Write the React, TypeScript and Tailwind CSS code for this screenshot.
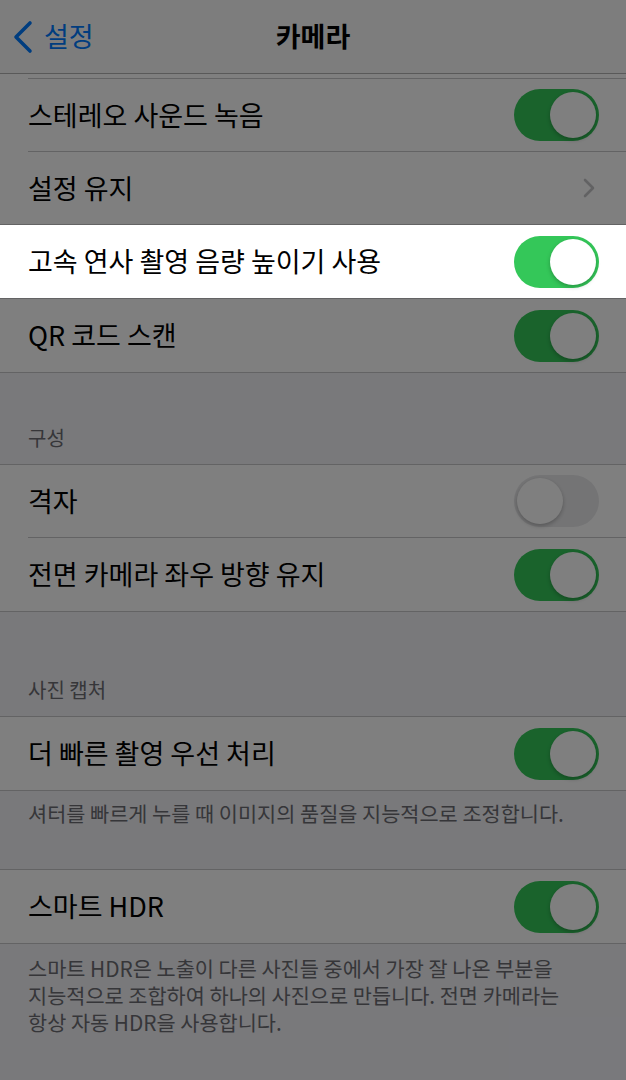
import { ReactNode } from 'react'
import clsx from 'clsx'

const FONT = '"Noto Sans CJK KR", "Noto Sans", sans-serif'

function Toggle({ on = true }: { on?: boolean }) {
  return (
    <div
      className={clsx(
        'flex h-[52px] w-[85px] shrink-0 items-center rounded-full p-[3px]',
        on ? 'justify-end bg-[#34c759]' : 'justify-start bg-[#e9e9eb]',
      )}
    >
      <div className="h-[46px] w-[46px] rounded-full bg-white shadow-[0_2px_4px_rgba(0,0,0,0.25)]" />
    </div>
  )
}

function Chevron() {
  return (
    <svg width="14" height="22" viewBox="0 0 14 22" className="shrink-0">
      <path
        d="M3 3l8 8-8 8"
        fill="none"
        stroke="#c4c4c7"
        strokeWidth="2.6"
        strokeLinecap="round"
        strokeLinejoin="round"
      />
    </svg>
  )
}

function Row({
  label,
  right,
  last,
  highlight,
}: {
  label: string
  right: ReactNode
  last?: boolean
  highlight?: boolean
}) {
  return (
    <div
      className={clsx('bg-white pl-[28px]', {
        'border-b border-[#c6c6c8]': last,
        'relative z-10': highlight,
      })}
    >
      <div
        className={clsx(
          'flex h-[73px] items-center justify-between pr-[27px]',
          { 'border-b border-[#c6c6c8]': !last && !highlight },
        )}
      >
        <span className="text-[27px] text-black">{label}</span>
        {right}
      </div>
    </div>
  )
}

function SectionHeader({ title, height }: { title: string; height: string }) {
  return (
    <div
      className={clsx(
        'flex items-end border-b border-[#c6c6c8] pb-[11px] pl-[28px] text-[20px] text-[#6d6d72]',
        height,
      )}
    >
      {title}
    </div>
  )
}

export default function App() {
  return (
    <div
      className="relative h-[1080px] w-[626px] overflow-hidden bg-[#f2f2f7]"
      style={{ fontFamily: FONT }}
    >
      {/* --- Nav bar --- */}
      <div className="grid h-[74px] grid-cols-[1fr_auto_1fr] items-center border-b border-[#b2b2b2] bg-[#fbfbfb]">
        <div className="flex items-center gap-[10px] pl-[12px] text-[#007aff]">
          <svg width="22" height="34" viewBox="0 0 22 34">
            <path
              d="M18 3L4 17l14 14"
              fill="none"
              stroke="#007aff"
              strokeWidth="3.6"
              strokeLinecap="round"
              strokeLinejoin="round"
            />
          </svg>
          <span className="text-[27px]">설정</span>
        </div>
        <span className="text-[27px] font-bold text-black">카메라</span>
        <div />
      </div>

      {/* --- Recording --- */}
      <div className="bg-white pl-[28px]">
        <div className="h-[5px] border-b border-[#c6c6c8]" />
      </div>
      <Row label="스테레오 사운드 녹음" right={<Toggle />} />
      <div className="border-b border-[#c6c6c8] bg-white pl-[28px]">
        <div className="flex h-[72px] items-center justify-between pr-[30px]">
          <span className="text-[27px] text-black">설정 유지</span>
          <Chevron />
        </div>
      </div>
      <Row label="고속 연사 촬영 음량 높이기 사용" right={<Toggle />} highlight />
      <div className="border-t border-[#c6c6c8]" />
      <Row label="QR 코드 스캔" right={<Toggle />} last />

      {/* --- 구성 --- */}
      <SectionHeader title="구성" height="h-[92px]" />
      <Row label="격자" right={<Toggle on={false} />} />
      <Row label="전면 카메라 좌우 방향 유지" right={<Toggle />} last />

      {/* --- 사진 캡처 --- */}
      <SectionHeader title="사진 캡처" height="h-[105px]" />
      <Row label="더 빠른 촬영 우선 처리" right={<Toggle />} last />
      <div className="h-[79px] border-b border-[#c6c6c8] px-[28px] pt-[9px] text-[20.8px] leading-[27px] text-[#6d6d72]">
        셔터를 빠르게 누를 때 이미지의 품질을 지능적으로 조정합니다.
      </div>
      <Row label="스마트 HDR" right={<Toggle />} last />
      <div className="px-[28px] pt-[11px] text-[20.8px] leading-[27px] text-[#6d6d72]">
        <p>스마트 HDR은 노출이 다른 사진들 중에서 가장 잘 나온 부분을</p>
        <p>지능적으로 조합하여 하나의 사진으로 만듭니다. 전면 카메라는</p>
        <p>항상 자동 HDR을 사용합니다.</p>
      </div>

      {/* dim layer; the highlighted row sits above it */}
      <div className="pointer-events-none absolute inset-0 z-[5] bg-black/50" />
    </div>
  )
}
